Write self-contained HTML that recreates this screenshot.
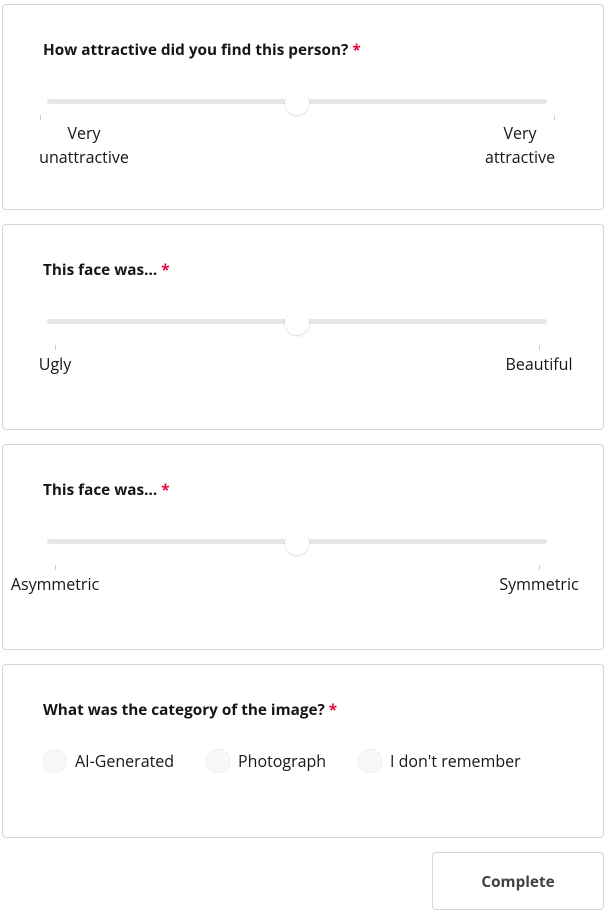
<!DOCTYPE html>
<html><head><style>
body{margin:0;width:606px;height:912px;background:#fff;font-family:"Open Sans","Liberation Sans",sans-serif;color:#161616;position:relative;overflow:hidden}
.p{position:absolute;left:2px;width:600px;border:1px solid #d6d6d6;border-radius:4px;background:#fff}
.t{position:absolute;left:40px;font-weight:bold;font-size:15.3px}
.t span{color:#e50a3e}
.tr{position:absolute;left:44px;width:500px;height:5px;background:#e6e6e6;border-radius:3px}
.th{position:absolute;width:24px;height:24px;border-radius:50%;background:#fff;box-shadow:0 1px 2px rgba(0,0,0,.15)}
.tk{position:absolute;width:1px;height:5px;background:#ccc}
.l{position:absolute;font-size:16px;text-align:center;line-height:24px;transform:translateX(-50%);white-space:nowrap}
.r{position:absolute;width:24px;height:24px;border-radius:50%;background:#f8f8f8;box-shadow:inset 0 0 1px rgba(0,0,0,.2)}
.rl{position:absolute;font-size:16px}
</style></head><body>
<div class="p" style="top:4px;height:204px">
<div class="t" style="top:35px">How attractive did you find this person? <span>*</span></div>
<div class="tr" style="top:94px"></div><div class="th" style="left:282px;top:86px"></div>
<div class="tk" style="left:37px;top:110px"></div><div class="tk" style="left:551px;top:110px"></div>
<div class="l" style="left:81px;top:116px">Very<br>unattractive</div>
<div class="l" style="left:517px;top:116px">Very<br>attractive</div>
</div>
<div class="p" style="top:224px;height:204px">
<div class="t" style="top:35px">This face was... <span>*</span></div>
<div class="tr" style="top:94px"></div><div class="th" style="left:282px;top:86px"></div>
<div class="tk" style="left:52px;top:120px"></div><div class="tk" style="left:536px;top:120px"></div>
<div class="l" style="left:52px;top:127px">Ugly</div>
<div class="l" style="left:536px;top:127px">Beautiful</div>
</div>
<div class="p" style="top:444px;height:204px">
<div class="t" style="top:35px">This face was... <span>*</span></div>
<div class="tr" style="top:94px"></div><div class="th" style="left:282px;top:86px"></div>
<div class="tk" style="left:52px;top:120px"></div><div class="tk" style="left:536px;top:120px"></div>
<div class="l" style="left:52px;top:127px">Asymmetric</div>
<div class="l" style="left:536px;top:127px">Symmetric</div>
</div>
<div class="p" style="top:664px;height:172px">
<div class="t" style="top:35px">What was the category of the image? <span>*</span></div>
<div class="r" style="left:40px;top:84px"></div><div class="rl" style="left:72px;top:85px">AI-Generated</div>
<div class="r" style="left:203px;top:84px"></div><div class="rl" style="left:235px;top:85px">Photograph</div>
<div class="r" style="left:355px;top:84px"></div><div class="rl" style="left:387px;top:85px">I don't remember</div>
</div>
<div style="position:absolute;left:432px;top:852px;width:170px;height:56px;border:1px solid #d6d6d6;border-radius:4px;font-weight:bold;font-size:15.3px;color:#404040;text-align:center;line-height:58px">Complete</div>
</body></html>
